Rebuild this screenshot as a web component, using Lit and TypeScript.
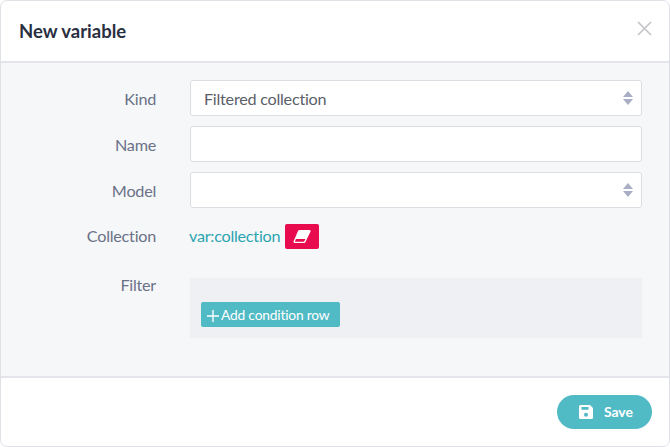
import { LitElement, html, css } from "lit";
import { customElement } from "lit/decorators.js";

const arrows = html`<svg class="arrows" width="10" height="14" viewBox="0 0 10 14"><path d="M5 0 L10 6 H0 Z M0 8 H10 L5 14 Z" fill="#a9aec4"/></svg>`;

@customElement("app-root")
export class AppRoot extends LitElement {
  static styles = css`
    :host { display: block; width: 670px; height: 447px; font-family: Lato, sans-serif; box-sizing: border-box; }
    .modal { box-sizing: border-box; width: 670px; height: 447px; border: 1px solid #e0e1e6; border-radius: 7px; background: #fff; display: flex; flex-direction: column; overflow: hidden; }
    .head { height: 60px; flex: none; display: flex; align-items: center; justify-content: space-between; padding: 0 18px; border-bottom: 2px solid #e4e5ea; }
    .title { font-size: 18.5px; font-weight: 700; color: #2a2f3f; margin-top: -1px; }
    .close { display: block; margin-top: -5px; margin-right: -1px; }
    .body { flex: 1; background: #f6f7f9; padding: 17px 28px 0 0; display: flex; flex-direction: column; }
    .row { display: grid; grid-template-columns: 155px 452px; column-gap: 34px; align-items: center; margin-bottom: 10px; }
    .label { text-align: right; font-size: 16.2px; letter-spacing: -0.25px; color: #6a7187; padding-top: 1px; }
    .field { box-sizing: border-box; height: 36px; background: #fff; border: 1px solid #dcdde3; border-radius: 3px; display: flex; align-items: center; padding: 1px 8px 0 13px; font-size: 16.2px; letter-spacing: -0.25px; color: #5b6069; }
    .arrows { margin-left: auto; margin-top: -1px; }
    .coll { margin-top: 4px; margin-bottom: 28px; height: 28px; }
    .coll .label { padding-top: 0; margin-top: -1px; }
    .val { display: flex; align-items: center; gap: 5px; margin-left: -1px; }
    .link { font-size: 16.2px; letter-spacing: -0.25px; color: #2aa5b0; margin-top: -1px; }
    .erase { width: 34px; height: 25px; background: #e80c4f; border-radius: 2px; display: flex; align-items: center; justify-content: center; }
    .filter { align-items: start; margin: 0; }
    .filter .label { line-height: 14px; padding-top: 0; }
    .panel { box-sizing: border-box; height: 60px; background: #eff0f3; padding: 24px 11px 0; }
    .add { display: inline-flex; align-items: center; gap: 2px; height: 25px; width: 139px; box-sizing: border-box; padding-left: 6px; background: #50bac5; color: #fff; font-size: 13.8px; letter-spacing: -0.2px; border-radius: 2px; white-space: nowrap; }
    .plus { margin-top: 2px; }
    .foot { height: 70px; flex: none; border-top: 2px solid #e4e5ea; box-sizing: border-box; display: flex; justify-content: flex-end; align-items: flex-start; padding: 17px 17px 0 0; }
    .save { display: flex; align-items: center; gap: 11px; width: 95px; height: 34px; box-sizing: border-box; padding: 0 0 1px 22px; background: #50bac5; color: #fff; font-size: 14px; font-weight: 700; letter-spacing: -0.1px; border-radius: 18px; }
  `;

  render() {
    return html`
      <div class="modal">
        <div class="head">
          <div class="title">New variable</div>
          <svg class="close" width="15" height="15" viewBox="0 0 15 15"><path d="M1 1 L14 14 M14 1 L1 14" stroke="#c4c5c8" stroke-width="1.7" fill="none"/></svg>
        </div>
        <div class="body">
          <div class="row"><div class="label">Kind</div><div class="field">Filtered collection ${arrows}</div></div>
          <div class="row"><div class="label">Name</div><div class="field"></div></div>
          <div class="row"><div class="label">Model</div><div class="field">${arrows}</div></div>
          <div class="row coll"><div class="label">Collection</div>
            <div class="val"><span class="link">var:collection</span>
              <span class="erase"><svg width="18" height="13" viewBox="0 0 18 13"><path d="M6.5 0 H16.5 Q18 0 17.5 1.5 L12.5 12 Q12 12.8 11 13 H2 Q0.2 13 0.5 11.5 L5 1 Q5.5 0 6.5 0 Z" fill="#fff"/><path d="M3 9 H12.4 L11.1 11.8 H1.8 Z" fill="#e80c4f"/></svg></span>
            </div>
          </div>
          <div class="row filter"><div class="label">Filter</div>
            <div class="panel"><div class="add"><svg class="plus" width="12" height="12" viewBox="0 0 12 12"><path d="M6 0 V12 M0 6 H12" stroke="#fff" stroke-width="1.4"/></svg>Add condition row</div></div>
          </div>
        </div>
        <div class="foot">
          <div class="save"><svg width="14" height="14" viewBox="0 0 14 14"><path fill-rule="evenodd" d="M1.5 0 H11 L14 3 V12.5 A1.5 1.5 0 0 1 12.5 14 H1.5 A1.5 1.5 0 0 1 0 12.5 V1.5 A1.5 1.5 0 0 1 1.5 0 Z M2.5 2 V4.8 H9.5 V2 Z M7 7.8 A2 2 0 1 0 7 11.8 A2 2 0 1 0 7 7.8 Z" fill="#fff"/></svg>Save</div>
        </div>
      </div>
    `;
  }
}
